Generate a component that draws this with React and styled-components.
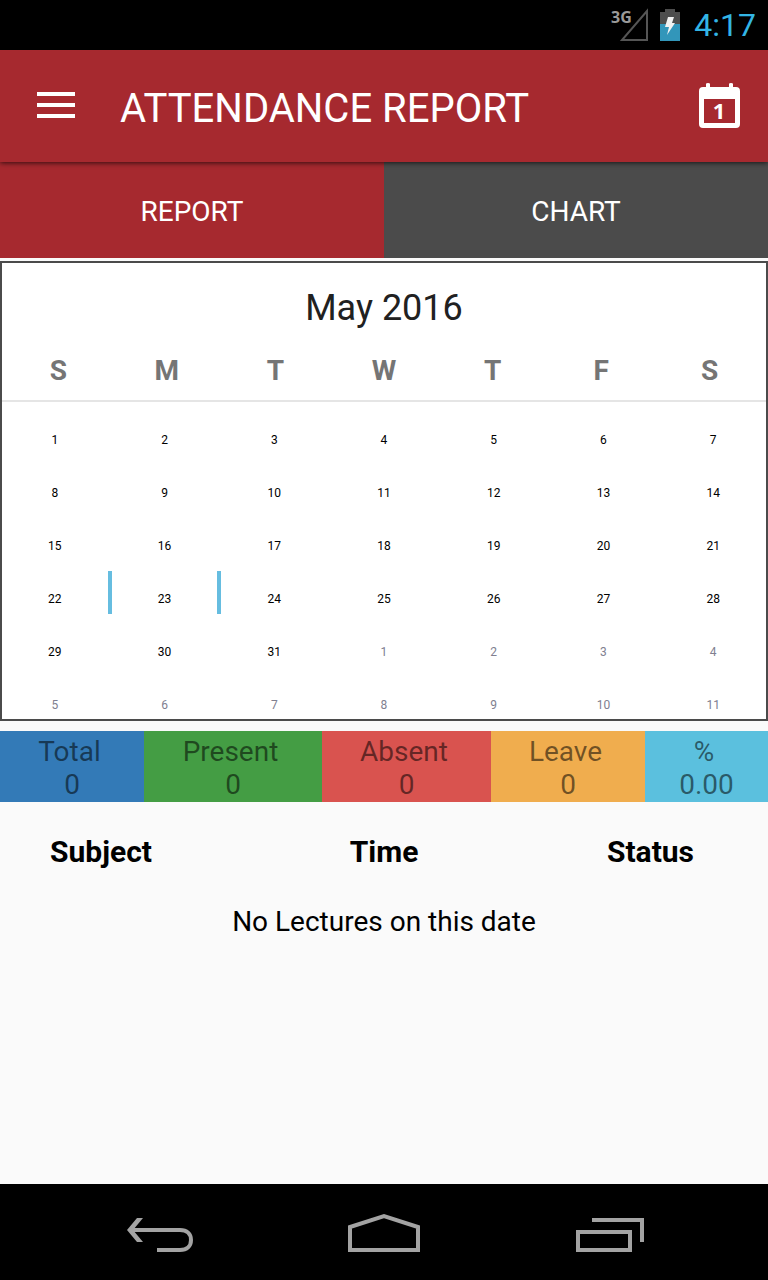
import styled, { createGlobalStyle } from 'styled-components';

const GlobalStyle = createGlobalStyle`
  * {
    box-sizing: border-box;
  }
  body {
    margin: 0;
    background: #fafafa;
    font-family: Roboto, "Noto Sans", sans-serif;
  }
  button {
    margin: 0;
    padding: 0;
    border: none;
    background: none;
    color: inherit;
    font: inherit;
  }
  svg {
    display: block;
  }
`

const Screen = styled.div`
  display: flex;
  flex-direction: column;
  min-height: 100vh;
`

const StatusBar = styled.div`
  display: flex;
  align-items: center;
  justify-content: flex-end;
  gap: 12px;
  height: 50px;
  padding-right: 12px;
  background: #000;
`

const Clock = styled.time`
  color: #33b5e5;
  font-size: 32px;
  line-height: 50px;
  margin-left: 2px;
`

const Header = styled.header`
  display: flex;
  align-items: center;
  position: relative;
  z-index: 1;
  height: 112px;
  padding: 0 28px 0 36px;
  background: #a6292f;
  color: #fff;
  box-shadow: 0 1px 5px rgba(0, 0, 0, 0.7);
`

const Title = styled.h1`
  flex: 1;
  margin: 0 0 0 44px;
  padding-top: 6px;
  font-size: 40px;
  font-weight: 400;
  line-height: 48px;
`

const Tabs = styled.div`
  display: flex;
  margin-bottom: 3px;
`

const Tab = styled.button`
  flex: 1;
  height: 96px;
  padding-top: 2px;
  background: ${(props) => (props.$active ? '#a6292f' : '#4b4b4b')};
  color: #fff;
  font-size: 28px;
`

const CalendarBox = styled.section`
  overflow: hidden;
  border: 2px solid #4b4b4b;
  background: #fff;
`

const Month = styled.h2`
  margin: 0;
  padding-top: 20px;
  color: #212121;
  font-size: 36px;
  font-weight: 400;
  line-height: 50px;
  text-align: center;
`

const Calendar = styled.table`
  display: block;
`

const WeekDays = styled.thead`
  display: block;
  padding: 0 2px;
  border-bottom: 2px solid #e5e5e5;
`

const Weeks = styled.tbody`
  display: grid;
  gap: 10px;
  margin: 0 -2px -1px;
  padding-top: 10px;
`

const Week = styled.tr`
  display: grid;
  grid-template-columns: repeat(7, 1fr);
`

const WeekDay = styled.th`
  padding: 18px 0 9px;
  color: #757575;
  font-size: 28px;
  font-weight: 700;
  line-height: 40px;
`

const DayCell = styled.td`
  position: relative;
  padding: 0;

  &::before,
  &::after {
    content: '';
    display: ${(props) => (props.$selected ? 'block' : 'none')};
    position: absolute;
    top: 0;
    bottom: 0;
    width: 4px;
    background: #66bde0;
  }
  &::before {
    left: -2px;
  }
  &::after {
    right: -2px;
  }
`

const Day = styled.button`
  display: block;
  width: 100%;
  height: 43px;
  padding-top: 13px;
  color: ${(props) => (props.$muted ? '#808090' : '#000')};
  font-size: 12px;
  line-height: 30px;
`

const Stats = styled.dl`
  display: grid;
  grid-template-columns: 144fr 178fr 169fr 154fr 123fr;
  margin: 10px 0 0;
`

const Stat = styled.div`
  padding: 4px 0 1px;
  background: ${(props) => props.$color};
  color: rgba(0, 0, 0, 0.54);
  font-size: 28px;
  line-height: 33px;
  text-align: center;
`

const StatName = styled.dt`
  padding-right: 5px;
`

const StatValue = styled.dd`
  margin: 0;
`

const Lectures = styled.table`
  width: 100%;
  table-layout: fixed;
  border-collapse: collapse;
  color: #000;
`

const LectureHead = styled.th`
  height: 98px;
  padding: 0 74px 0 50px;
  font-size: 30px;
  font-weight: 700;
  text-align: ${(props) => props.$align};
`

const TimeHead = styled(LectureHead)`
  padding: 0;
`

const Empty = styled.td`
  padding: 0;
  font-size: 28px;
  line-height: 44px;
  text-align: center;
`

const NavBar = styled.nav`
  display: flex;
  align-items: center;
  justify-content: space-between;
  height: 96px;
  margin-top: auto;
  padding: 0 122px;
  background: #000;
`

const weekDays = ['S', 'M', 'T', 'W', 'T', 'F', 'S']

const weeks = [
  [1, 2, 3, 4, 5, 6, 7],
  [8, 9, 10, 11, 12, 13, 14],
  [15, 16, 17, 18, 19, 20, 21],
  [22, 23, 24, 25, 26, 27, 28],
  [29, 30, 31, 1, 2, 3, 4],
  [5, 6, 7, 8, 9, 10, 11],
]

const stats = [
  { name: 'Total', value: '0', color: '#337ab7' },
  { name: 'Present', value: '0', color: '#449d44' },
  { name: 'Absent', value: '0', color: '#d9534f' },
  { name: 'Leave', value: '0', color: '#f0ad4e' },
  { name: '%', value: '0.00', color: '#5bc0de' },
]

function SignalIcon() {
  return (
    <svg width="40" height="42" viewBox="-2 -4 40 42">
      <path d="M37 3V32H12Z" fill="none" stroke="#555" strokeWidth="2" />
      <text x="1" y="15" fill="#9a9a9a" fontFamily="Open Sans" fontSize="16" fontWeight="700">3G</text>
    </svg>
  )
}

function BatteryIcon() {
  return (
    <svg width="20" height="32" viewBox="0 0 20 32">
      <path d="M0 3H5V0H15V3H20V32H0Z" fill="#4d4d4d" />
      <path d="M0 15H20V32H0Z" fill="#3296ba" />
      <path d="M8 8H14L12 14H15L7 26L9 18H5Z" fill="#f2f2f2" />
    </svg>
  )
}

function MenuIcon() {
  return (
    <svg width="40" height="30" viewBox="0 0 40 30">
      <path d="M1 3H39M1 14H39M1 25H39" stroke="#fff" strokeWidth="4" />
    </svg>
  )
}

function TodayIcon() {
  return (
    <svg width="41" height="48" viewBox="0 0 41 48">
      <path
        d="M7 2Q7 1 9 1Q11 1 11 2V5H30V2Q30 1 32 1Q34 1 34 2V5H37Q41 5 41 9V42Q41 46 37 46H4Q0 46 0 42V9Q0 5 4 5H7ZM5 17V41H36V17Z"
        fill="#fff"
        fillRule="evenodd"
      />
      <text x="20" y="37" fill="#fff" fontFamily="Open Sans" fontSize="22" fontWeight="700" textAnchor="middle">1</text>
    </svg>
  )
}

function BackIcon() {
  return (
    <svg width="76" height="48" viewBox="0 0 76 48">
      <path d="M8 22H58C65 22 69 26 69 32C69 38 65 42 58 42H35" fill="none" stroke="#a3a3a3" strokeWidth="4" />
      <path d="M15 10H21L11 22L21 34H15L5 22Z" fill="#a3a3a3" />
    </svg>
  )
}

function HomeIcon() {
  return (
    <svg width="76" height="48" viewBox="0 0 76 48">
      <path d="M4 42V19L38 8L72 19V42Z" fill="none" stroke="#a3a3a3" strokeWidth="4" />
    </svg>
  )
}

function RecentIcon() {
  return (
    <svg width="76" height="48" viewBox="0 0 76 48">
      <path d="M8 24H60V42H8Z M22 12H72V34" fill="none" stroke="#a3a3a3" strokeWidth="4" />
    </svg>
  )
}

function App() {
  return (
    <Screen>
      <GlobalStyle />

      <StatusBar>
        <SignalIcon />
        <BatteryIcon />
        <Clock>4:17</Clock>
      </StatusBar>

      <Header>
        <button aria-label="Menu"><MenuIcon /></button>
        <Title>ATTENDANCE REPORT</Title>
        <button aria-label="Today"><TodayIcon /></button>
      </Header>

      <Tabs role="tablist">
        <Tab role="tab" aria-selected="true" $active>REPORT</Tab>
        <Tab role="tab" aria-selected="false">CHART</Tab>
      </Tabs>

      <CalendarBox>
        <Month>May 2016</Month>
        <Calendar>
          <WeekDays>
            <Week>
              {weekDays.map((day, i) => (
                <WeekDay key={i}>{day}</WeekDay>
              ))}
            </Week>
          </WeekDays>
          <Weeks>
            {weeks.map((week, row) => (
              <Week key={row}>
                {week.map((day) => (
                  <DayCell key={day} $selected={row === 3 && day === 23}>
                    <Day $muted={row > 3 && day < 12}>{day}</Day>
                  </DayCell>
                ))}
              </Week>
            ))}
          </Weeks>
        </Calendar>
      </CalendarBox>

      <Stats>
        {stats.map((stat) => (
          <Stat key={stat.name} $color={stat.color}>
            <StatName>{stat.name}</StatName>
            <StatValue>{stat.value}</StatValue>
          </Stat>
        ))}
      </Stats>

      <Lectures>
        <thead>
          <tr>
            <LectureHead $align="left">Subject</LectureHead>
            <TimeHead $align="center">Time</TimeHead>
            <LectureHead $align="right">Status</LectureHead>
          </tr>
        </thead>
        <tbody>
          <tr>
            <Empty colSpan={3}>No Lectures on this date</Empty>
          </tr>
        </tbody>
      </Lectures>

      <NavBar>
        <button aria-label="Back"><BackIcon /></button>
        <button aria-label="Home"><HomeIcon /></button>
        <button aria-label="Recent apps"><RecentIcon /></button>
      </NavBar>
    </Screen>
  )
}

export default App
